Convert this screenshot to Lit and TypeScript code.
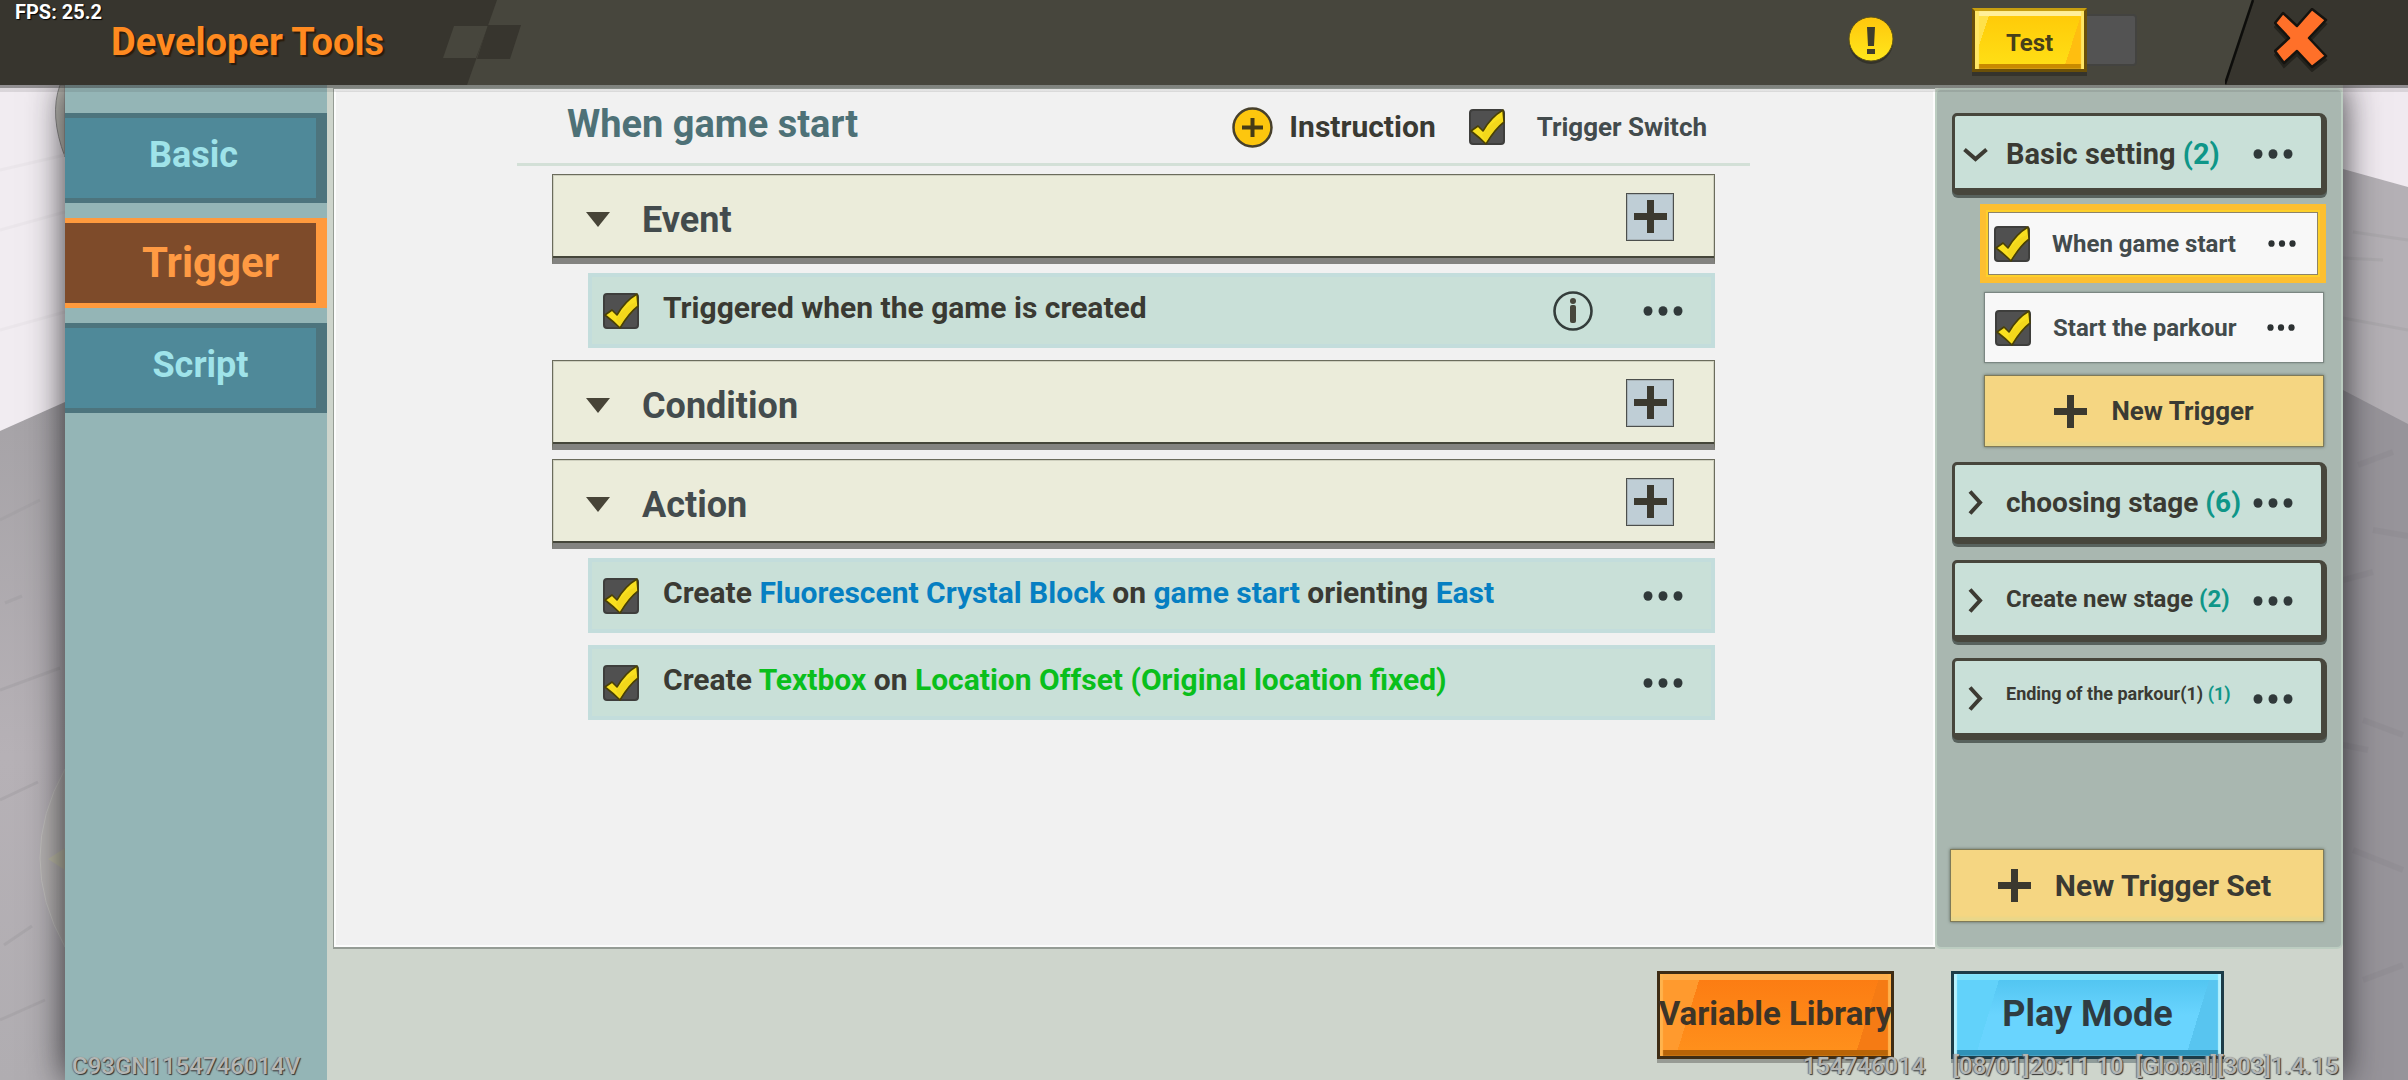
import { LitElement, html, css, svg, nothing } from "lit";
import { customElement, property } from "lit/decorators.js";

const dots = (cls: string) => svg`<svg class=${cls} viewBox="0 0 40 10" aria-hidden="true">
  <ellipse cx="5" cy="5" rx="4.5" ry="4.8"/><ellipse cx="20" cy="5" rx="4.5" ry="4.8"/><ellipse cx="35" cy="5" rx="4.5" ry="4.8"/></svg>`;

const plus = () => svg`<svg class="plus" viewBox="0 0 33 33" aria-hidden="true"><path d="M13 0h7v13h13v7H20v13h-7V20H0v-7h13z"/></svg>`;

@customElement("tick-box")
export class TickBox extends LitElement {
  @property() label = "";
  static styles = css`
    :host { display: block; flex: none; width: 36px; height: 36px; }
    .box { display: grid; width: 36px; height: 36px; cursor: pointer; }
    .input, .mark { grid-area: 1 / 1; width: 36px; height: 36px; margin: 0; }
    .input { appearance: none; background: #505050; border: 2px solid #3e3e3c; border-radius: 4px; box-sizing: border-box; }
    .mark { overflow: visible; pointer-events: none; }
    .input:not(:checked) + .mark { visibility: hidden; }
  `;
  render() {
    return html`<label class="box">
      <input class="input" type="checkbox" checked aria-label=${this.label} />
      <svg class="mark" viewBox="0 0 36 36" aria-hidden="true">
        <path d="M2 22 9 17 14 22Q22 8 34 1L35 13Q26 20 17 35Q11 29 2 22Z" fill="#f9e01f" stroke="#4a4105" stroke-width="1.6" stroke-linejoin="round"/>
        <path d="M13 26Q22 13 33 9L34 13Q25 19 17 33Z" fill="#e9c814" opacity=".35"/>
      </svg>
    </label>`;
  }
}

type Part = { text: string; tone?: "blue" | "green" };
type Row = { parts: Part[]; info?: boolean };
type Section = { name: string; rows: Row[] };

const sections: Section[] = [
  { name: "Event", rows: [{ parts: [{ text: "Triggered when the game is created" }], info: true }] },
  { name: "Condition", rows: [] },
  {
    name: "Action",
    rows: [
      {
        parts: [
          { text: "Create " }, { text: "Fluorescent Crystal Block", tone: "blue" }, { text: " on " },
          { text: "game start", tone: "blue" }, { text: " orienting " }, { text: "East", tone: "blue" },
        ],
      },
      {
        parts: [
          { text: "Create " }, { text: "Textbox", tone: "green" }, { text: " on " },
          { text: "Location Offset (Original location fixed)", tone: "green" },
        ],
      },
    ],
  },
];

type Group = { name: string; count: number; size: string; triggers?: string[] };
const groups: Group[] = [
  { name: "Basic setting", count: 2, size: "largest", triggers: ["When game start", "Start the parkour"] },
  { name: "choosing stage", count: 6, size: "large" },
  { name: "Create new stage", count: 2, size: "medium" },
  { name: "Ending of the parkour(1)", count: 1, size: "small" },
];

@customElement("app-root")
export class AppRoot extends LitElement {
  static styles = css`
    :host {
      display: block;
      font-family: Roboto, "Liberation Sans", sans-serif;
      font-weight: 700;
      color: #3a3a33;
    }
    * { box-sizing: border-box; }
    button { font: inherit; color: inherit; margin: 0; padding: 0; border: 0; background: none; cursor: pointer; }
    h1, h2, p { margin: 0; padding: 0; font: inherit; }
    svg { display: block; flex: none; }

    .app { position: relative; display: flex; flex-direction: column; height: 100vh; overflow: hidden; background: #aaa6ab; }
    .scene { position: absolute; top: 0; width: 65px; height: 100%; }
    .scene.left { left: 0; }
    .scene.right { right: 0; }

    .top { position: relative; z-index: 1; display: flex; align-items: stretch; height: 85px; flex: none; background: #47463d; }
    .brand { position: relative; display: flex; align-items: center; width: 530px; padding: 0 0 2px 111px; color: #ff8a20; font-size: 38px; line-height: 54px; text-shadow: 2px 2px 1px #2a1c0c; }
    .brand .shape { position: absolute; left: 0; top: 0; width: 530px; height: 85px; }
    .brand .name { position: relative; }
    .fps { position: absolute; left: 15px; top: 0; font-size: 20px; line-height: 24px; color: #fff; text-shadow: 1px 1px 1px #000; }
    .tools { display: flex; flex: 1; justify-content: flex-end; align-items: center; gap: 78px; padding: 0 88px 6px 0; }
    .alert svg { width: 46px; height: 48px; }
    .switch { display: flex; align-items: center; width: 165px; }
    .test { width: 115px; height: 64px; border: 3px solid #6b5008; border-top-color: #c79e10; background: linear-gradient(#ffef9a 0 5px, transparent 5px), linear-gradient(to top, #c98a00 0 5px, transparent 5px), linear-gradient(108deg, #ffe14a 0 12%, transparent 12% 84%, #ffbe10 84%), linear-gradient(#ffc907, #ffe016); box-shadow: 0 4px 0 #35342c, inset 4px 0 1px #ffe766, inset -3px 0 1px #ffe766; font-size: 24px; line-height: 28px; color: #47401a; padding-top: 7px; }
    .track { width: 50px; height: 52px; background: #535353; border: 2px solid #434340; border-left: 0; border-radius: 0 4px 4px 0; }
    .closer { position: relative; width: 183px; display: flex; align-items: center; padding: 0 0 5px 49px; }
    .closer .shape { position: absolute; inset: 0; width: 183px; height: 85px; }
    .closer button { position: relative; }
    .closer .cross { width: 54px; height: 64px; }

    .window { position: relative; display: flex; flex: 1; min-height: 0; margin: 0 65px; background: #ced5cc; box-shadow: 0 0 34px 0 rgba(20, 20, 24, .85); }
    .shade { position: absolute; left: 0; right: 0; top: 85px; height: 7px; z-index: 1; background: linear-gradient(rgba(50, 50, 50, .5) 0 3px, rgba(50, 50, 50, .12) 3px); }
    .tabs { display: flex; flex-direction: column; gap: 15px; width: 262px; flex: none; padding-top: 28px; background: #94b5b6; }
    .tab { height: 90px; width: 262px; background: #4f8999; border: solid #4d747d; border-width: 5px 11px 5px 0; color: #9fe3e9; font-size: 36px; line-height: 42px; padding: 0 0 6px 6px; }
    .tab.active { background: #7e4b2a; border-color: #ff9a3d; color: #ff9a43; font-size: 42px; padding: 0 0 0 40px; }
    .tab.last { padding-left: 20px; }
    .work { display: flex; flex-direction: column; flex: 1; min-width: 0; padding-left: 6px; }
    .panes { display: flex; flex: 1; min-height: 0; padding-top: 3px; }
    .editor { flex: 1; min-width: 0; padding: 0 185px 0 183px; background: #f1f1f1; border: 1px solid #959c95; border-width: 1px 0 2px 1px; box-shadow: inset 0 0 0 2px #fcfcfc; }
    .head { display: flex; align-items: center; height: 77px; padding: 2px 43px 0 50px; border-bottom: 3px solid #d3e0d7; }
    .title { flex: 1; font-size: 38px; line-height: 44px; color: #4e7177; padding-bottom: 6px; }
    .instruction { display: flex; align-items: center; gap: 16px; font-size: 30px; line-height: 34px; }
    .instruction svg { width: 41px; height: 41px; }
    .power { display: flex; align-items: center; gap: 32px; margin-left: 33px; font-size: 26px; line-height: 30px; color: #434b4d; }
    .list { display: flex; flex-direction: column; padding: 8px 35px 0; }
    .section { display: flex; align-items: center; height: 90px; padding: 0 40px 0 33px; margin-bottom: 9px; background: #ebecda; border: 1px solid #6b6c5c; border-bottom: 6px solid #838380; box-shadow: inset 0 -2px 0 #45463a, inset 0 0 0 1px #cfd0bf; color: #434b4d; }
    .fold { display: flex; align-items: center; gap: 32px; flex: 1; font-size: 36px; line-height: 42px; padding-top: 6px; }
    .fold svg { width: 24px; height: 16px; fill: #474437; }
    .add { width: 48px; height: 48px; display: grid; place-items: center; background: #bfced6; border: 1px solid #4c4f4d; box-shadow: inset 0 0 0 1px #a9b4b9; }
    .plus { width: 33px; height: 33px; fill: #3b392f; }
    .rule { display: flex; align-items: center; height: 75px; margin: 0 0 12px 36px; padding: 0 32px 0 15px; background: #c9e0d8; box-shadow: inset 0 0 0 4px #c3dddc; font-size: 30px; line-height: 34px; }
    .rule .text { flex: 1; padding: 0 0 5px 24px; white-space: pre; }
    .blue { color: #067fc2; }
    .green { color: #0abf1c; }
    .info { width: 40px; height: 40px; margin-right: 50px; }
    .info svg { width: 40px; height: 40px; }
    .dots { width: 40px; height: 10px; fill: #30393a; }
    .dots-small { width: 28px; height: 7px; fill: #2d3233; }

    .side { display: flex; flex-direction: column; width: 408px; flex: none; padding: 23px 14px 25px 15px; background: #a9b7b0; border: 2px solid #bccdc1; border-radius: 6px; }
    .group { display: flex; align-items: center; height: 82px; flex: none; margin-bottom: 16px; padding: 3px 28px 0 8px; background: #c9e0d8; border: solid #47463c; border-width: 3px 6px 7px 3px; border-radius: 5px 8px 6px 6px; box-shadow: 0 3px 0 #58625d; }
    .group.open { margin-bottom: 9px; }
    .group .toggle { display: flex; align-items: center; flex: 1; gap: 18px; }
    .group .toggle svg { width: 25px; height: 25px; fill: none; stroke: #3d3b33; stroke-width: 4; }
    .largest { font-size: 29px; line-height: 34px; }
    .large { font-size: 28px; line-height: 34px; }
    .medium { font-size: 24px; line-height: 30px; padding-bottom: 4px; }
    .small { font-size: 18px; line-height: 24px; padding-bottom: 10px; }
    .count { color: #0f9688; }
    .subs { display: flex; flex-direction: column; gap: 9px; padding: 0 1px 0 28px; margin-bottom: 15px; }
    .item { display: flex; align-items: center; height: 71px; margin: 0 2px 3px 4px; padding: 0 28px 0 10px; background: #f8f8f8; border: 1px solid #7b8782; box-shadow: 0 0 2px #7b8782; font-size: 24px; line-height: 30px; color: #434b4d; }
    .item.selected { height: 79px; margin: 0; padding: 0 22px 0 6px; border: 8px solid #fdbf31; box-shadow: inset 0 0 0 1px #8d8468; outline: 2px solid #fdd02b; outline-offset: -8px; }
    .item .text { flex: 1; padding-left: 22px; }
    .make { display: flex; align-items: center; justify-content: center; gap: 24px; height: 73px; flex: none; background: #f5d682; border: 1px solid #7f7a58; box-shadow: 0 0 3px #5f685c, inset 0 -4px 2px #e9d789; }
    .make.trigger { height: 72px; margin: 0 2px 0 4px; font-size: 26px; line-height: 30px; }
    .make.set { margin: auto 3px 0 -2px; padding-right: 5px; font-size: 30px; line-height: 34px; }

    .foot { display: flex; justify-content: flex-end; gap: 57px; height: 131px; flex: none; padding: 22px 119px 0 0; }
    .big { height: 88px; line-height: 40px; white-space: nowrap; display: flex; justify-content: center; align-items: center; padding-bottom: 2px; }
    .big.variable { width: 237px; border: 3px solid #3e2c14; color: #3c3428; font-size: 33px; background: linear-gradient(#ffae4c 0 6px, transparent 6px), linear-gradient(to top, #b86407 0 6px, transparent 6px), linear-gradient(107deg, #ff9a2e 0 16%, transparent 16% 86%, #f57b14 86%), linear-gradient(#fc7b12, #ff911c); box-shadow: 0 4px 0 #979b94, inset 3px 0 1px #ffb34d, inset -3px 0 1px #ffb34d; }
    .big.play { width: 273px; border: 3px solid #1d3c48; color: #2f3c42; font-size: 36px; background: linear-gradient(#7fe2fb 0 6px, transparent 6px), linear-gradient(to top, #2f92b8 0 6px, transparent 6px), linear-gradient(107deg, #62d2fa 0 16%, transparent 16% 88%, #58c5f0 88%), linear-gradient(#4fc3ef, #69d4fe 50%); box-shadow: 0 4px 0 #8f9c9a, inset 3px 0 1px #b7f1fe, inset -3px 0 1px #b7f1fe; }
    .mark { position: absolute; bottom: 0; font-size: 24px; line-height: 28px; font-weight: 500; color: #b4b6b4; text-shadow: 1px 1px 1px #333, -1px 0 1px #777; white-space: pre; }
    .mark.id { left: 72px; }
    .mark.build { right: 69px; display: flex; gap: 27px; }
  `;

  private rule(row: Row) {
    return html`<div class="rule">
      <tick-box .label=${row.parts.map((p) => p.text).join("")}></tick-box>
      <p class="text">${row.parts.map((p) => html`<span class=${p.tone ?? "plain"}>${p.text}</span>`)}</p>
      ${row.info
        ? html`<button class="info" aria-label="Information"><svg viewBox="0 0 40 40">
            <circle cx="20" cy="20" r="18.5" fill="none" stroke="#343d3b" stroke-width="2.6"/>
            <circle cx="20" cy="10" r="3" fill="#47463c"/><rect x="17" y="14" width="6" height="18" rx="2" fill="#47463c"/></svg></button>`
        : nothing}
      <button aria-label="More">${dots("dots")}</button>
    </div>`;
  }

  private section(s: Section) {
    return html`<div class="section">
        <button class="fold"><svg viewBox="0 0 24 16"><path d="M0 0h24L12 15z"/></svg><span>${s.name}</span></button>
        <button class="add" aria-label="Add to ${s.name}">${plus()}</button>
      </div>
      ${s.rows.map((r) => this.rule(r))}`;
  }

  private group(g: Group) {
    const open = !!g.triggers;
    return html`<div class="group ${open ? "open" : ""}">
        <button class="toggle" aria-expanded=${open}>
          <svg viewBox="0 0 25 25"><path d=${open ? "M1.5 8.5 12.5 18 23.5 8.5" : "M7 1.5 17 12.5 7 23.5"}/></svg>
          <span class=${g.size}>${g.name} <span class="count">(${g.count})</span></span>
        </button>
        <button aria-label="More">${dots("dots")}</button>
      </div>
      ${g.triggers
        ? html`<div class="subs">
            ${g.triggers.map((t, i) => html`<div class="item ${i === 0 ? "selected" : ""}">
              <tick-box .label=${t}></tick-box><p class="text">${t}</p>
              <button aria-label="More">${dots("dots-small")}</button></div>`)}
            <button class="make trigger">${plus()}<span>New Trigger</span></button>
          </div>`
        : nothing}`;
  }

  render() {
    return html`<div class="app">
      <svg class="scene left" viewBox="0 0 65 1080" preserveAspectRatio="none" aria-hidden="true">
        <defs><linearGradient id="floor" x2="0" y2="1"><stop offset=".38" stop-color="#a6a3a7"/><stop offset=".7" stop-color="#b6b1b6"/><stop offset="1" stop-color="#b0adb1"/></linearGradient></defs>
        <rect width="65" height="1080" fill="url(#floor)"/><path d="M0 0h65v402L0 431z" fill="#f1ecf1"/>
        <path d="M65 85H60Q49 115 65 157z" fill="#c3c2ba" stroke="#8d8c8a"/>
        <path d="M0 170 65 155M0 230 65 212M0 330 65 312" stroke="#e6e2e6" stroke-width="3" opacity=".5"/>
        <path d="M0 520 40 500M5 603 22 596M0 690 60 668M0 800 38 782M4 945 32 926M0 1020 45 1000" stroke="#9f9ca0" stroke-width="3" opacity=".45"/>
        <path d="M65 769Q15 858 65 947z" fill="#b5b4ad" fill-opacity=".5" stroke="#c2c0be"/><path d="M65 848 48 859 65 870z" fill="#bcbaa6"/>
      </svg>
      <svg class="scene right" viewBox="0 0 65 1080" preserveAspectRatio="none" aria-hidden="true">
        <rect width="65" height="1080" fill="#97949a"/><path d="M0 0h65v424L0 390z" fill="#b4b0b5"/><path d="M0 0h65v187L0 169z" fill="#f0eaf0"/>
        <path d="M10 232 65 240M0 258 40 260M0 318 65 330" stroke="#a6a3a7" stroke-width="3" opacity=".5"/>
        <path d="M15 465 50 452M30 530 65 536M0 580 30 572M20 720 60 735M0 745 25 750M10 850 60 870M20 980 60 965" stroke="#8d8a90" stroke-width="6" opacity=".4"/>
      </svg>
      <header class="top">
        <div class="brand">
          <svg class="shape" viewBox="0 0 530 85" aria-hidden="true"><path d="M0 0h497l-30 85H0z" fill="#37352e"/>
            <path d="M454 26h34l-12 32h-33z" fill="#47463d"/><path d="M488 25h33l-11 34h-33z" fill="#37352e"/></svg>
          <h1 class="name">Developer Tools</h1>
          <span class="fps">FPS: 25.2</span>
        </div>
        <div class="tools">
          <button class="alert" aria-label="Notice"><svg viewBox="0 0 46 48"><ellipse cx="23" cy="26" rx="22" ry="22" fill="#33322a"/>
            <defs><linearGradient id="y" x2="0" y2="1"><stop stop-color="#ffc60c"/><stop offset="1" stop-color="#ffe81c"/></linearGradient></defs>
            <circle cx="23" cy="23" r="22" fill="url(#y)" stroke="#5c5217"/><path d="M19 11h8l-1 19h-6zM19 33h8v5h-8z" fill="#3f3e2c"/></svg></button>
          <div class="switch"><button class="test" role="switch" aria-checked="false">Test</button><span class="track"></span></div>
        </div>
        <div class="closer">
          <svg class="shape" viewBox="0 0 183 85" aria-hidden="true"><path d="M28 0h155v85H0z" fill="#37352e"/><path d="M28 0 0 84" stroke="#0d0d0b" stroke-width="2.5"/></svg>
          <button aria-label="Close"><svg class="cross" viewBox="0 0 54 64">
            <path d="M9 9 1 19 15 34 1 47 10 59 23 47 38 63 52 52 35 34 52 16 38 5 23 22z" fill="#24231d" stroke="#24231d" stroke-width="2"/>
            <path d="M9 5 1 15 15 30 1 43 10 55 23 43 38 59 52 48 35 30 52 12 38 1 23 18z" fill="#ff7029" stroke="#15130f" stroke-width="2.5" stroke-linejoin="round"/></svg></button>
        </div>
      </header>
      <div class="window">
        <nav class="tabs">
          <button class="tab">Basic</button>
          <button class="tab active" aria-current="page">Trigger</button>
          <button class="tab last">Script</button>
        </nav>
        <div class="work">
          <div class="panes">
            <main class="editor">
              <div class="head">
                <h2 class="title">When game start</h2>
                <button class="instruction"><svg viewBox="0 0 41 41"><circle cx="20.5" cy="20.5" r="19" fill="#fdc60e" stroke="#47402c" stroke-width="2.5"/>
                  <path d="M18.500 11h4v7.500H31v4h-8.500V30h-4v-7.500H10v-4h8.500z" fill="#463c16"/></svg>Instruction</button>
                <div class="power"><tick-box label="Trigger Switch"></tick-box><span>Trigger Switch</span></div>
              </div>
              <div class="list">${sections.map((s) => this.section(s))}</div>
            </main>
            <aside class="side">
              ${groups.map((g) => this.group(g))}
              <button class="make set">${plus()}<span>New Trigger Set</span></button>
            </aside>
          </div>
          <footer class="foot">
            <button class="big variable">Variable Library</button>
            <button class="big play">Play Mode</button>
          </footer>
        </div>
      </div>
      <div class="shade"></div>
      <span class="mark id">C93GN1154746014V</span>
      <span class="mark build"><span>154746014</span><span>[08/01]20:11 10  [Global][303]1.4.15</span></span>
    </div>`;
  }
}
